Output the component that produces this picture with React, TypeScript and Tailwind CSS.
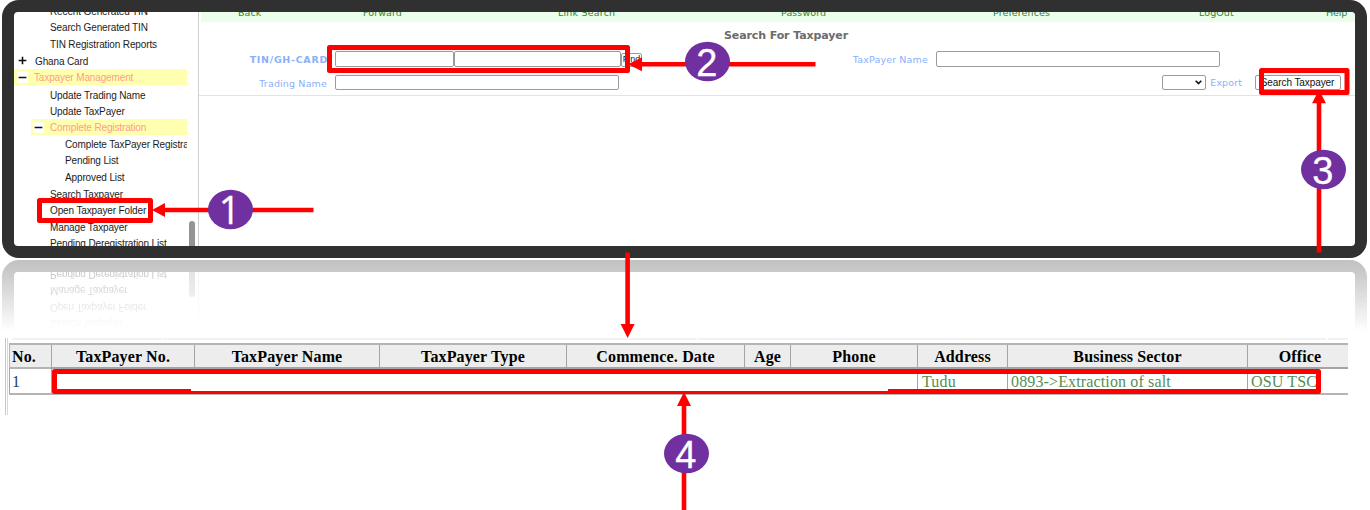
import React from "react";

type NavItem = { label: string; row: string; icon?: "plus" | "minus"; indent: string; hot?: boolean };

const nav: NavItem[] = [
  { label: "Recent Generated TIN", row: "h-[16px]", indent: "pl-[36px]" },
  { label: "Search Generated TIN", row: "h-[17px] pb-px", indent: "pl-[36px]" },
  { label: "TIN Registration Reports", row: "h-[16px]", indent: "pl-[36px]" },
  { label: "Ghana Card", row: "h-[17px]", indent: "pl-[3px]", icon: "plus" },
  { label: "Taxpayer Management", row: "h-[16px]", indent: "pl-[3px]", icon: "minus", hot: true },
  { label: "Update Trading Name", row: "h-[18px] pt-px", indent: "pl-[36px]" },
  { label: "Update TaxPayer", row: "h-[16px]", indent: "pl-[36px]" },
  { label: "Complete Registration", row: "h-[16px]", indent: "ml-[17px] pl-[2px]", icon: "minus", hot: true },
  { label: "Complete TaxPayer Registration", row: "h-[18px]", indent: "pl-[51px]" },
  { label: "Pending List", row: "h-[15px] pb-px", indent: "pl-[51px]" },
  { label: "Approved List", row: "h-[17px]", indent: "pl-[51px]" },
  { label: "Search Taxpayer", row: "h-[18px]", indent: "pl-[36px]" },
  { label: "Open Taxpayer Folder", row: "h-[15px] pb-px", indent: "pl-[36px]" },
  { label: "Manage Taxpayer", row: "h-[17px]", indent: "pl-[36px]" },
  { label: "Pending Deregistration List", row: "h-[16px]", indent: "pl-[36px]" },
];

function Toggle({ kind }: { kind: "plus" | "minus" }) {
  return (
    <span className={kind === "minus" ? "mr-[6px] flex h-[11px] w-[11px] shrink-0 items-center justify-center bg-white" : "mr-[7px] flex h-[11px] w-[11px] shrink-0 items-center justify-center"}>
      <svg width="9" height="9" viewBox="0 0 9 9" stroke="#111" strokeWidth="1.6">
        <path d={kind === "plus" ? "M.6 4.5H8.4M4.5 .8V8.2" : "M.6 4.5H8.4"} />
      </svg>
    </span>
  );
}

function Sidebar() {
  return (
    <div className="flex w-[185px] shrink-0 overflow-hidden border-r border-[#cfcfcf]">
      <nav className="-mt-[9px] flex w-[173px] shrink-0 flex-col overflow-hidden font-['Liberation_Sans',Arial,sans-serif] text-[10px] leading-none tracking-[-0.13px] text-[#1c1c1c]">
        {nav.map((n) => (
          <div
            key={n.label}
            className={`flex shrink-0 items-center whitespace-nowrap ${n.row} ${n.indent} ${n.hot ? "bg-[#ffffb0] text-[#ff9c8c]" : ""}`}
          >
            {n.icon && <Toggle kind={n.icon} />}
            <span className="pt-[2px]">{n.label}</span>
          </div>
        ))}
      </nav>
      <div className="mt-[209px] ml-[2px] h-[40px] w-[6px] rounded-full bg-[#949494]" />
    </div>
  );
}

const box = "box-border shrink-0 rounded-[2px] border border-[#9b9b9b] bg-white";
const label = "shrink-0 text-right leading-none whitespace-nowrap text-[#8ab0fb]";

function Main() {
  return (
    <div className="flex w-[1156px] shrink-0 flex-col font-['DejaVu_Sans',Verdana,sans-serif]">
      <div className="ml-[2px] h-[10px] overflow-hidden bg-[#ebfdeb]">
        <div className="-mt-[4px] flex text-[9.5px] leading-[10px] tracking-[0.1px] text-[#3c803c]">
          <span className="w-[125px] pl-[37px]">Back</span>
          <span className="w-[195px] pl-[37px]">Forward</span>
          <span className="w-[223px] pl-[37px] tracking-[0.2px]">Link Search</span>
          <span className="w-[212px] pl-[37px]">Password</span>
          <span className="w-[206px] pl-[37px]">Preferences</span>
          <span className="w-[127px] pl-[37px]">LogOut</span>
          <span className="pl-[37px] tracking-[-0.1px]">Help</span>
        </div>
      </div>
      <div className="flex h-[29px] items-center justify-center pb-[3px] pl-[18px] text-[11px] leading-none font-bold tracking-[-0.1px] whitespace-nowrap text-[#6b6b6b]">
        Search For Taxpayer
      </div>
      <div className="flex h-[16px] items-center">
        <span className={`${label} mr-[7px] w-[129px] pt-[2px] text-[9.5px] font-bold tracking-[0.7px]`}>TIN/GH-CARD</span>
        <div className={`${box} h-[16px] w-[119px]`} />
        <div className={`${box} h-[16px] w-[167px]`} />
        <div className={`${box} mt-[2px] flex h-[14px] w-[21px] items-center justify-center overflow-hidden font-['Liberation_Sans',Arial,sans-serif] text-[9px] text-[#222]`}>Find</div>
        <span className={`${label} mr-[8px] w-[286px] pt-[2px] text-[9.5px] tracking-[0.15px]`}>TaxPayer Name</span>
        <div className={`${box} h-[16px] w-[284px]`} />
      </div>
      <div className="mt-[8px] flex h-[15px] items-center">
        <span className={`${label} mr-[8px] w-[128px] pt-[2px] text-[9.5px] tracking-[0.15px]`}>Trading Name</span>
        <div className={`${box} h-[15px] w-[284px]`} />
        <div className={`${box} ml-[543px] flex h-[15px] w-[44px] items-center justify-end pr-[3px]`}>
          <svg width="7" height="5" viewBox="0 0 7 5" fill="none" stroke="#111" strokeWidth="1.6"><path d="M.7 .8 3.5 3.6 6.3 .8" /></svg>
        </div>
        <span className={`${label} ml-[4px] w-[32px] text-[9.5px] tracking-[0.1px]`}>Export</span>
        <div className={`${box} ml-[13px] flex h-[15px] w-[86px] items-center justify-center pr-px tracking-[-0.08px] whitespace-nowrap font-['Liberation_Sans',Arial,sans-serif] text-[10px] text-[#111]`}>Search Taxpayer</div>
      </div>
      <div className="mt-[5px] h-px bg-[#e4e4e4]" />
    </div>
  );
}

function Screen() {
  return (
    <div className="h-[258px] w-[1365px] rounded-[17px] bg-[#303030] p-[12px]">
      <div className="flex h-[234px] w-[1341px] overflow-hidden rounded-[4px] bg-white">
        <Sidebar />
        <Main />
      </div>
    </div>
  );
}

const th = "border-l border-[#a4a4a4] p-0 pt-px text-center leading-[21px]";
const td = "border-l border-[#a4a4a4] p-0 pt-px";

function Results() {
  return (
    <div className="mt-[7px] ml-[5px] flex h-[77px] w-[1343px] border-l border-[#c6c6c6] font-['Liberation_Serif','Times_New_Roman',serif] text-[16px] tracking-[0.14px]">
      <div className="w-[2px] shrink-0 border-r border-[#d8d8d8]" />
      <div className="ml-px flex grow flex-col">
        <div className="mb-[3px] ml-[3px] flex h-[2px] gap-px">
          <div className="w-[150px] bg-[#f2f2f2]" />
          <div className="w-[533px] bg-[#f2f2f2]" />
          <div className="w-[629px] bg-[#f2f2f2]" />
          <div className="ml-px grow bg-[#f2f2f2]" />
        </div>
        <table className="w-[1339px] table-fixed border-separate border-spacing-0 border-y-2 border-[#b4b4b4]">
          <colgroup>
            <col className="w-[42px]" /><col className="w-[143px]" /><col className="w-[185px]" /><col className="w-[187px]" /><col className="w-[178px]" />
            <col className="w-[46px]" /><col className="w-[127px]" /><col className="w-[90px]" /><col className="w-[240px]" /><col className="w-[101px]" />
          </colgroup>
          <thead>
            <tr className="h-[24px] bg-[#ededed] whitespace-nowrap text-black">
              <th className="border-b-2 border-l border-[#b4b4b4] p-0 pt-px pl-[2px] text-left leading-[21px]">No.</th>
              <th className={`${th} border-b-2`}>TaxPayer No.</th>
              <th className={`${th} border-b-2`}>TaxPayer Name</th>
              <th className={`${th} border-b-2`}>TaxPayer Type</th>
              <th className={`${th} border-b-2`}>Commence. Date</th>
              <th className={`${th} border-b-2`}>Age</th>
              <th className={`${th} border-b-2`}>Phone</th>
              <th className={`${th} border-b-2`}>Address</th>
              <th className={`${th} border-b-2`}>Business Sector</th>
              <th className={`${th} border-b-2 pl-[4px]`}>Office</th>
            </tr>
          </thead>
          <tbody>
            <tr className="h-[24px] leading-[22px] whitespace-nowrap text-[#548f54]">
              <td className={`${td} pl-[2px] text-[#24425c]`}>1</td>
              <td colSpan={6} className={td} />
              <td className={`${td} pl-[4px]`}>Tudu</td>
              <td className={`${td} pl-[3px]`}>0893-&gt;Extraction of salt</td>
              <td className={`${td} pl-[3px]`}>OSU TSC</td>
            </tr>
          </tbody>
        </table>
      </div>
    </div>
  );
}

const badges = [
  { n: "1", x: 230.5, y: 209.5, font: "font-['Open_Sans',sans-serif]" },
  { n: "2", x: 707.5, y: 61.5, font: "font-['Liberation_Sans',Arial,sans-serif]" },
  { n: "3", x: 1323.5, y: 169.5, font: "font-['Liberation_Sans',Arial,sans-serif]" },
  { n: "4", x: 686.5, y: 453.5, font: "font-['Liberation_Sans',Arial,sans-serif]" },
];

function Annotations() {
  return (
    <svg className="absolute top-0 left-0" width="1370" height="510" viewBox="0 0 1370 510">
      <g fill="none" stroke="#ff0000" strokeWidth="5" strokeLinejoin="round">
        <rect x="39.5" y="200.5" width="111" height="20" />
        <rect x="329.5" y="47.5" width="298" height="23" />
        <rect x="1261.5" y="70.5" width="85.5" height="22" />
        <rect x="54.5" y="371.5" width="1264" height="20" />
      </g>
      <rect x="191" y="388" width="697" height="3" fill="#fff" />
      <g stroke="#ff0000" strokeWidth="4.6">
        <path d="M313.5 210H162" />
        <path d="M815.5 64.2H640" />
        <path d="M1319 252.5V102" />
        <path d="M627.6 252.5V325" />
        <path d="M684 510V405" />
      </g>
      <g fill="#ff0000">
        <path d="M152 210 165 203V217Z" />
        <path d="M628 64.2 642 57.2V71.2Z" />
        <path d="M1319 90 1326 103.3H1312Z" />
        <path d="M627.6 338 634.6 324H620.6Z" />
        <path d="M684 392 691 406H677Z" />
      </g>
      {badges.map((b) => (
        <g key={b.n}>
          <ellipse cx={b.x} cy={b.y} rx="22.5" ry="19.8" fill="#7030a0" />
          <text x={b.x - 0.8} y={b.y + 14} textAnchor="middle" fontSize="38" fill="#fff" stroke="#fff" strokeWidth="0.3" className={b.font}>{b.n}</text>
        </g>
      ))}
    </svg>
  );
}

export default function App() {
  return (
    <div className="relative flex h-[510px] w-[1370px] flex-col overflow-hidden bg-white">
      <div className="ml-[2px] h-[259px] shrink-0">
        <Screen />
      </div>
      <div
        aria-hidden="true"
        className="ml-[2px] h-[72px] shrink-0 overflow-hidden pt-px [mask-image:linear-gradient(to_bottom,rgba(0,0,0,.3)_0,rgba(0,0,0,.25)_15px,rgba(0,0,0,0)_72px)]"
      >
        <div className="-scale-y-100 blur-[0.6px]">
          <Screen />
        </div>
      </div>
      <Results />
      <Annotations />
    </div>
  );
}
